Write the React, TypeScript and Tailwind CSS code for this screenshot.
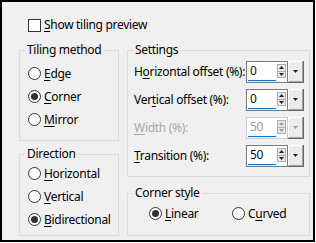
import type { ReactNode } from "react";

const font = "font-['Noto_Sans','Open_Sans',sans-serif]";

function U({ children }: { children: ReactNode }) {
  return <span className="underline underline-offset-2">{children}</span>;
}

function Radio({ checked, children }: { checked?: boolean; children: ReactNode }) {
  return (
    <div className="flex h-[23px] items-center">
      <span className="flex h-[13px] w-[13px] shrink-0 items-center justify-center rounded-full border border-[#333333] bg-white">
        {checked && <span className="h-[7px] w-[7px] rounded-full bg-[#333333]" />}
      </span>
      <span className="ml-[3px] whitespace-nowrap leading-[16px]">{children}</span>
    </div>
  );
}

function Group({ title, className, children }: { title: string; className: string; children: ReactNode }) {
  return (
    <fieldset className={`border border-[#dcdcdc] ${className}`}>
      <legend className="ml-[5px] whitespace-nowrap px-[2px] leading-[16px]">{title}</legend>
      {children}
    </fieldset>
  );
}

function Spin({ value, disabled }: { value: string; disabled?: boolean }) {
  const arrow = disabled ? "#9a9a9a" : "#222222";
  return (
    <div className="flex h-[22px] w-[58px] shrink-0">
      <div className={`flex w-[42px] border bg-white ${disabled ? "border-[#cfcfcf]" : "border-[#7a7a7a]"}`}>
        <div className="flex w-[30px] flex-col pl-[1px]">
          <span className={`flex-1 pl-[2px] leading-[18px] ${disabled ? "text-[#9a9a9a]" : "text-[#111111]"}`}>
            {value}
          </span>
          <span className="mb-[1px] h-[2px] w-[28px] bg-[#0078d7]" />
        </div>
        <div className="ml-auto mr-[1px] mt-[2px] flex h-[14px] w-[9px] flex-col border border-[#adadad] bg-[#e9e9e9]">
          <span className="flex flex-1 items-center justify-center border-b border-[#adadad]">
            <svg width="5" height="3" viewBox="0 0 5 3">
              <polygon points="0,3 2.5,0 5,3" fill={arrow} />
            </svg>
          </span>
          <span className="flex flex-1 items-center justify-center">
            <svg width="5" height="3" viewBox="0 0 5 3">
              <polygon points="0,0 5,0 2.5,3" fill={arrow} />
            </svg>
          </span>
        </div>
      </div>
      <div className="flex w-[16px] border-r border-b border-[#696969]">
        <div className="flex flex-1 items-center justify-center border-t border-l border-white border-r border-b border-r-[#a0a0a0] border-b-[#a0a0a0] bg-[#ececec]">
          <svg width="5" height="3" viewBox="0 0 5 3">
            <polygon points="0,0 5,0 2.5,3" fill={arrow} />
          </svg>
        </div>
      </div>
    </div>
  );
}

function Row({ label, value, disabled }: { label: ReactNode; value: string; disabled?: boolean }) {
  return (
    <div className="flex h-[22px] items-center justify-between">
      <span className={`whitespace-nowrap leading-[16px] ${disabled ? "text-[#a8a8a8]" : ""}`}>{label}</span>
      <Spin value={value} disabled={disabled} />
    </div>
  );
}

export default function App() {
  return (
    <div className={`h-[243px] w-[316px] bg-white text-[12px] tracking-[-0.3px] text-black ${font}`}>
      <div className="h-[242px] w-[315px] border-2 border-black bg-[#f0f0f0] pl-[17px] pt-[15px]">
        <div className="ml-[9px] flex h-[16px] items-center">
          <span className="h-[13px] w-[13px] border border-[#333333] bg-white" />
          <span className="ml-[3px] whitespace-nowrap leading-[16px]">
            <U>S</U>how tiling preview
          </span>
        </div>

        <div className="mt-[9px] flex gap-[8px]">
          <div className="flex w-[100px] flex-col gap-[5px]">
            <Group title="Tiling method" className="h-[99px]">
              <div className="flex flex-col pl-[8px] pt-[4px]">
                <Radio><U>E</U>dge</Radio>
                <Radio checked><U>C</U>orner</Radio>
                <Radio><U>M</U>irror</Radio>
              </div>
            </Group>
            <Group title="Direction" className="h-[90px]">
              <div className="flex flex-col pl-[8px]">
                <Radio><U>H</U>orizontal</Radio>
                <Radio><U>V</U>ertical</Radio>
                <Radio checked><U>B</U>idirectional</Radio>
              </div>
            </Group>
          </div>

          <div className="flex w-[183px] flex-col gap-[8px]">
            <Group title="Settings" className="h-[135px]">
              <div className="flex flex-col gap-[6px] pl-[6px] pr-[5px] pt-[3px]">
                <Row label={<>H<U>o</U>rizontal offset (%):</>} value="0" />
                <Row label={<>Ver<U>t</U>ical offset (%):</>} value="0" />
                <Row label={<><U>W</U>idth (%):</>} value="50" disabled />
                <Row label={<><U>T</U>ransition (%):</>} value="50" />
              </div>
            </Group>
            <Group title="Corner style" className="h-[51px]">
              <div className="flex pl-[21px] pt-[1px]">
                <div className="w-[83px]">
                  <Radio checked><U>L</U>inear</Radio>
                </div>
                <Radio>C<U>u</U>rved</Radio>
              </div>
            </Group>
          </div>
        </div>
      </div>
    </div>
  );
}
